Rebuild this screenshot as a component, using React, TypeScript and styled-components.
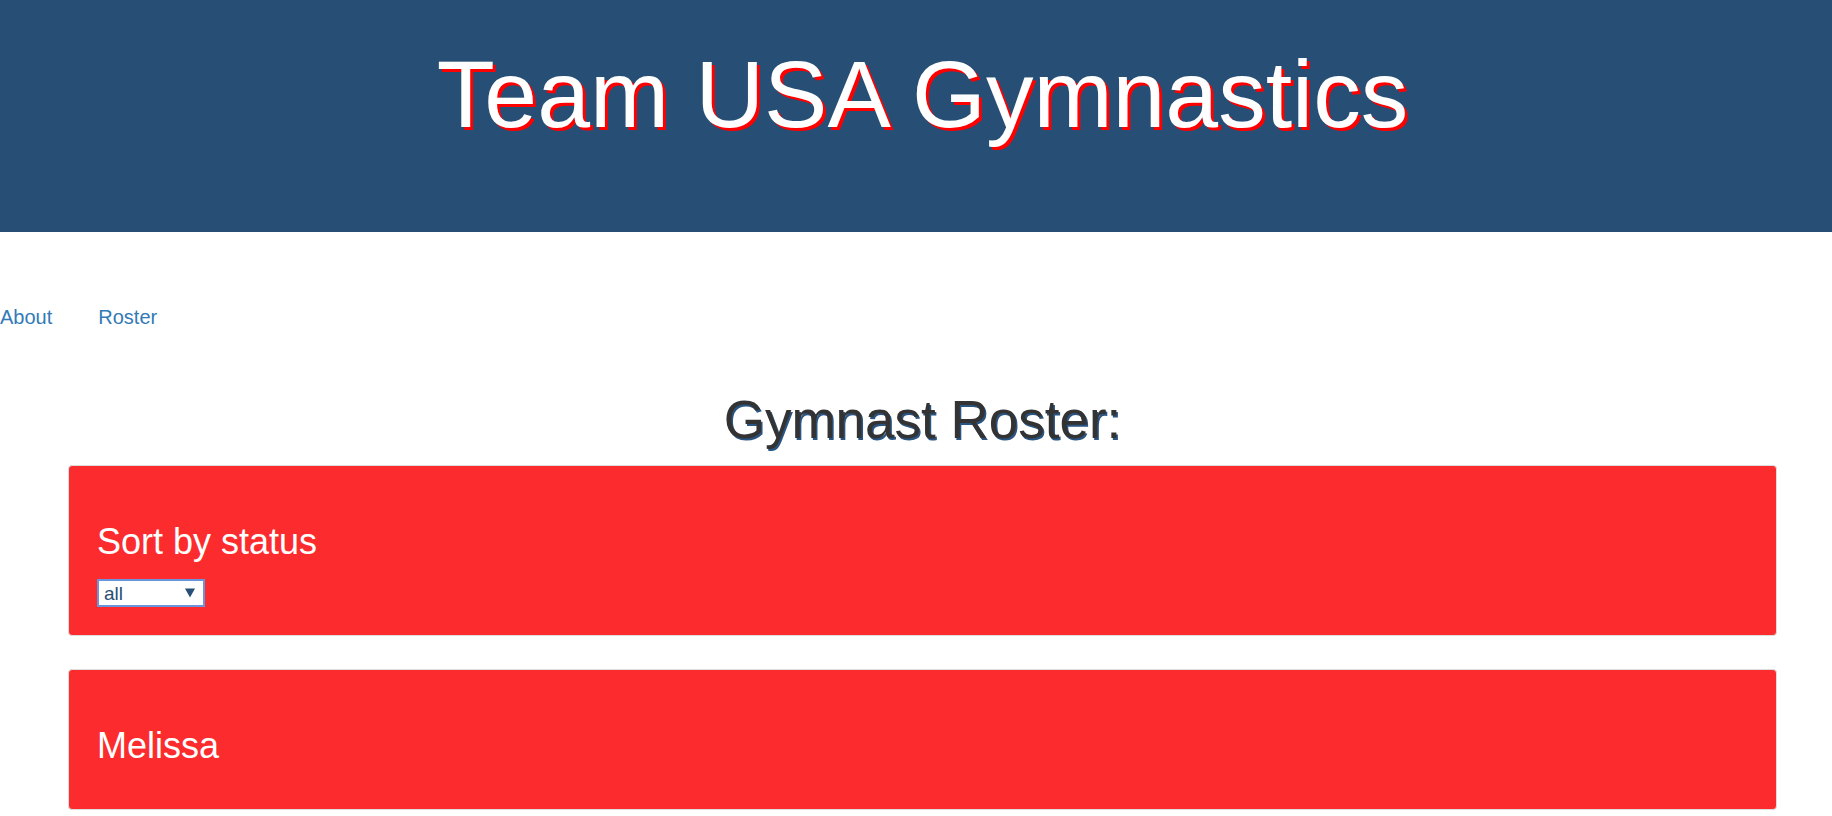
import React from "react";
import styled, { createGlobalStyle } from "styled-components";

const GlobalStyle = createGlobalStyle`
  html, body {
    margin: 0;
    padding: 0;
    background: #ffffff;
    font-family: "Liberation Sans", Arial, Helvetica, sans-serif;
  }
  * { box-sizing: border-box; }
`;

const Header = styled.header`
  height: 232px;
  background: #274f75;
  padding: 47px 55px 0 68px;
`;

const Title = styled.h1`
  margin: 0;
  font-size: 95px;
  font-weight: 400;
  line-height: 1;
  text-align: center;
  color: #ffffff;
  text-shadow: 3px 3px 0 #ff0000;
`;

const Nav = styled.nav`
  display: flex;
  gap: 46px;
  margin-top: 75px;
`;

const NavLink = styled.a`
  font-size: 20px;
  line-height: 1;
  color: #337ab7;
  text-decoration: none;
`;

const Main = styled.main`
  padding: 66px 55px 0 68px;
`;

const Heading = styled.h2`
  margin: 0 0 19px;
  font-size: 53px;
  font-weight: 400;
  line-height: 1;
  text-align: center;
  color: #333333;
  text-shadow: 1.5px 1.5px 0 #2a5482;
`;

const Panel = styled.section<{ $gap?: number; $bottom?: number }>`
  background: #fc2b2d;
  border: 1px solid #dddddd;
  border-radius: 4px;
  padding: 58px 28px ${(p) => p.$bottom ?? 28}px;
  margin-bottom: ${(p) => p.$gap ?? 0}px;
`;

const PanelTitle = styled.h3`
  margin: 0 0 19px;
  font-size: 36px;
  font-weight: 400;
  line-height: 1;
  color: #ffffff;
`;

const SelectWrap = styled.div`
  position: relative;
  width: 108px;
  height: 28px;
`;

const Select = styled.select`
  appearance: none;
  -webkit-appearance: none;
  width: 100%;
  height: 100%;
  border: 2px solid #6a95dc;
  border-radius: 0;
  background: #ffffff;
  color: #274f75;
  font-family: "Liberation Sans", Arial, sans-serif;
  font-size: 19px;
  padding: 0 0 0 5px;
  outline: none;
`;

const Arrow = styled.span`
  position: absolute;
  right: 10px;
  top: 50%;
  transform: translateY(-50%);
  width: 0;
  height: 0;
  border-left: 5px solid transparent;
  border-right: 5px solid transparent;
  border-top: 9px solid #274f75;
  pointer-events: none;
`;

export default function App() {
  return (
    <>
      <GlobalStyle />
      <Header>
        <Title>Team USA Gymnastics</Title>
      </Header>
      <Nav>
        <NavLink href="#about">About</NavLink>
        <NavLink href="#roster">Roster</NavLink>
      </Nav>
      <Main>
        <Heading>Gymnast Roster:</Heading>
        <Panel $gap={33}>
          <PanelTitle>Sort by status</PanelTitle>
          <SelectWrap>
            <Select defaultValue="all">
              <option value="all">all</option>
              <option value="active">active</option>
              <option value="retired">retired</option>
            </Select>
            <Arrow />
          </SelectWrap>
        </Panel>
        <Panel $bottom={26}>
          <PanelTitle>Melissa</PanelTitle>
        </Panel>
      </Main>
    </>
  );
}
